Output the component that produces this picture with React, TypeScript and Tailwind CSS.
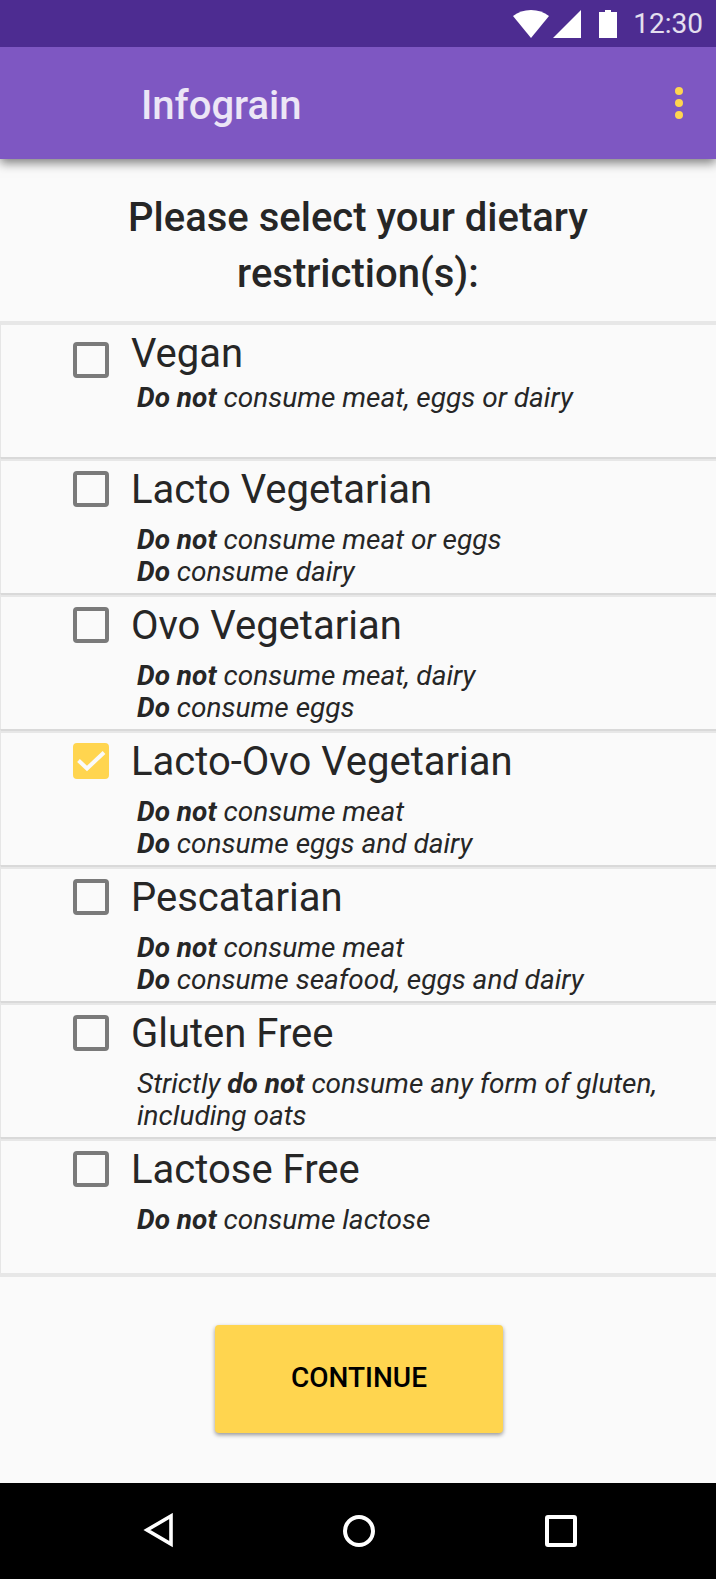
import { useState, type ReactNode } from 'react';
import clsx from 'clsx';

type Diet = {
  id: string;
  name: string;
  details: ReactNode[];
  compact?: boolean;
};

const diets: Diet[] = [
  {
    id: 'vegan',
    name: 'Vegan',
    details: [<><b>Do not</b> consume meat, eggs or dairy</>],
    compact: true,
  },
  {
    id: 'lacto',
    name: 'Lacto Vegetarian',
    details: [<><b>Do not</b> consume meat or eggs</>, <><b>Do</b> consume dairy</>],
  },
  {
    id: 'ovo',
    name: 'Ovo Vegetarian',
    details: [<><b>Do not</b> consume meat, dairy</>, <><b>Do</b> consume eggs</>],
  },
  {
    id: 'lacto-ovo',
    name: 'Lacto-Ovo Vegetarian',
    details: [<><b>Do not</b> consume meat</>, <><b>Do</b> consume eggs and dairy</>],
  },
  {
    id: 'pescatarian',
    name: 'Pescatarian',
    details: [<><b>Do not</b> consume meat</>, <><b>Do</b> consume seafood, eggs and dairy</>],
  },
  {
    id: 'gluten-free',
    name: 'Gluten Free',
    details: [<>Strictly <b>do not</b> consume any form of gluten, including oats</>],
  },
  {
    id: 'lactose-free',
    name: 'Lactose Free',
    details: [<><b>Do not</b> consume lactose</>],
  },
];

function StatusBar() {
  return (
    <div className="z-20 flex h-[47px] items-center justify-end bg-[#4d2c91] pr-[13px] text-white">
      <svg className="mr-1 h-7 w-9" viewBox="0 0 36 28" fill="currentColor" aria-hidden="true">
        <path d="M0 6C5 2 11 0 18 0s13 2 18 6L18 28z" />
      </svg>
      <svg className="mr-[18px] size-7" viewBox="0 0 28 28" fill="currentColor" aria-hidden="true">
        <path d="M28 0v28H0z" />
      </svg>
      <svg className="mr-4 h-7 w-[18px]" viewBox="0 0 18 28" fill="currentColor" aria-hidden="true">
        <path d="M6 0h6v2h6v26H0V2h6z" />
      </svg>
      <span className="text-[28px] leading-8 text-white/85">12:30</span>
    </div>
  );
}

function AppBar() {
  return (
    <header className="z-10 flex h-28 items-center justify-between bg-[#7e57c2] pr-[21px] pl-[141px] shadow-[0_4px_10px_rgba(0,0,0,0.5)]">
      <h1 className="pt-[6px] text-[40px] leading-12 font-medium text-white/85">Infograin</h1>
      <button type="button" aria-label="More options" className="flex h-12 w-8 items-center justify-center text-[#ffd54f]">
        <svg className="h-8 w-2" viewBox="0 0 8 32" fill="currentColor" aria-hidden="true">
          <circle cx="4" cy="4" r="4" />
          <circle cx="4" cy="16" r="4" />
          <circle cx="4" cy="28" r="4" />
        </svg>
      </button>
    </header>
  );
}

function DietRow({ diet, checked, onToggle }: { diet: Diet; checked: boolean; onToggle: () => void }) {
  return (
    <li className="flex min-h-[136px] border-t-2 border-l border-t-[#d9d9d9] border-l-[#e6e6e6] pt-[2px] pr-8 pl-[72px] shadow-[inset_0_2px_0_#e7e7e7] first:border-t-[#e7e7e7]">
      <div className={clsx('grid size-9 shrink-0', diet.compact ? 'mt-[17px]' : 'mt-[10px]')}>
        <input
          id={diet.id}
          type="checkbox"
          checked={checked}
          onChange={onToggle}
          className="col-start-1 row-start-1 size-9 appearance-none rounded-sm border-4 border-[#7a7a7a] checked:border-[#ffd54f] checked:bg-[#ffd54f]"
        />
        {checked && (
          <svg
            className="pointer-events-none col-start-1 row-start-1 size-9 text-[#fafafa]"
            viewBox="0 0 36 36"
            fill="none"
            stroke="currentColor"
            strokeWidth="4"
            aria-hidden="true"
          >
            <path d="M5.5 17.5l8.5 8L31 9.5" />
          </svg>
        )}
      </div>
      <div className="pt-[5px] pl-[22px]">
        <label htmlFor={diet.id} className="block text-[40px] leading-12">
          {diet.name}
        </label>
        <div className={clsx('pl-[6px] text-[28px] leading-8 italic', diet.compact ? 'mt-1' : 'mt-[10px]')}>
          {diet.details.map((line, i) => (
            <p key={i}>{line}</p>
          ))}
        </div>
      </div>
    </li>
  );
}

function NavBar() {
  return (
    <nav aria-label="System" className="flex h-24 items-center justify-center bg-black pl-[2px] text-white">
      <button type="button" aria-label="Back" className="flex w-[202px] justify-center">
        <svg className="h-9 w-8" viewBox="0 0 32 36" fill="none" stroke="currentColor" strokeWidth="3.6" aria-hidden="true">
          <path d="M30 3v28L6 17z" />
        </svg>
      </button>
      <button type="button" aria-label="Home" className="flex w-[202px] justify-center">
        <svg className="size-8" viewBox="0 0 32 32" fill="none" stroke="currentColor" strokeWidth="4" aria-hidden="true">
          <circle cx="16" cy="16" r="14" />
        </svg>
      </button>
      <button type="button" aria-label="Recent apps" className="flex w-[202px] justify-center">
        <svg className="size-8" viewBox="0 0 32 32" fill="none" stroke="currentColor" strokeWidth="4" aria-hidden="true">
          <rect x="2" y="2" width="28" height="28" rx="1" />
        </svg>
      </button>
    </nav>
  );
}

export default function App() {
  const [selected, setSelected] = useState<string[]>(['lacto-ovo']);

  const toggle = (id: string) =>
    setSelected((current) => (current.includes(id) ? current.filter((x) => x !== id) : [...current, id]));

  return (
    <div className="flex min-h-screen flex-col bg-[#fafafa] font-[Roboto,sans-serif] text-[#262626]">
      <StatusBar />
      <AppBar />
      <main className="flex grow flex-col">
        <h2 className="px-24 pt-[31px] pb-[19px] text-center text-[40px] leading-14 font-medium">
          Please select your dietary restriction(s):
        </h2>
        <ul className="border-b-4 border-[#e7e7e7]">
          {diets.map((diet) => (
            <DietRow key={diet.id} diet={diet} checked={selected.includes(diet.id)} onToggle={() => toggle(diet.id)} />
          ))}
        </ul>
        <div className="flex justify-center py-12 pl-[2px]">
          <button
            type="button"
            className="h-[108px] w-72 rounded-sm bg-[#ffd54f] pb-[2px] text-[28px] font-medium text-black shadow-[0_2px_4px_rgba(0,0,0,0.4)]"
          >
            CONTINUE
          </button>
        </div>
      </main>
      <NavBar />
    </div>
  );
}
